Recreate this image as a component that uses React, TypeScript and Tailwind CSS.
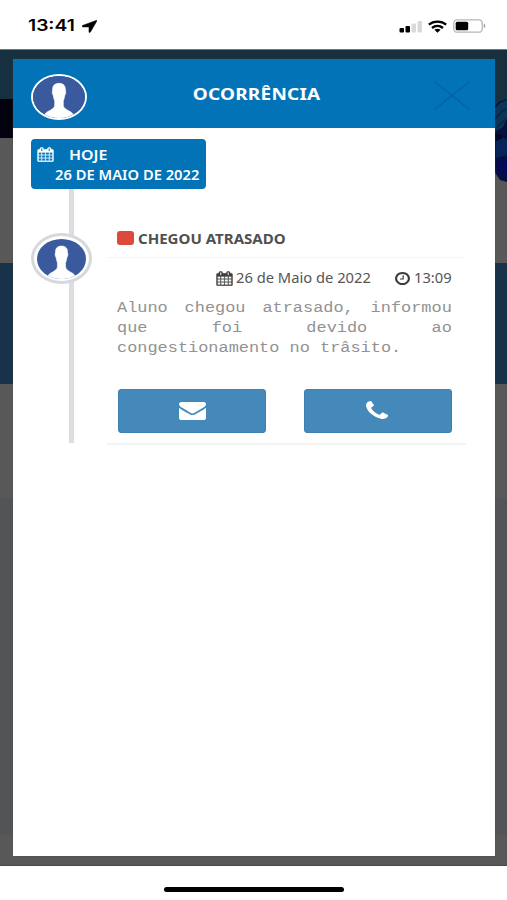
import type { ReactNode } from 'react'
import { clsx } from 'clsx'

interface IconProps {
  className?: string
}

interface GlyphProps extends IconProps {
  viewBox: string
  d: string
}

function Glyph({ viewBox, d, className }: GlyphProps) {
  return (
    <svg viewBox={viewBox} preserveAspectRatio="none" fill="currentColor" className={clsx('shrink-0', className)} aria-hidden="true">
      <path d={d} />
    </svg>
  )
}

const CALENDAR =
  'M128 1664h288v-288h-288v288zm352 0h320v-288h-320v288zm-352-352h288v-320h-288v320zm352 0h320v-320h-320v320zm-352-384h288v-288h-288v288zm736 736h320v-288h-320v288zm-384-736h320v-288h-320v288zm768 736h288v-288h-288v288zm-384-352h320v-320h-320v320zm-352-864v-288q0-13-9.5-22.5t-22.5-9.5h-64q-13 0-22.5 9.5t-9.5 22.5v288q0 13 9.5 22.5t22.5 9.5h64q13 0 22.5-9.5t9.5-22.5zm736 864h288v-320h-288v320zm-384-384h320v-288h-320v288zm384 0h288v-288h-288v288zm32-480v-288q0-13-9.5-22.5t-22.5-9.5h-64q-13 0-22.5 9.5t-9.5 22.5v288q0 13 9.5 22.5t22.5 9.5h64q13 0 22.5-9.5t9.5-22.5zm384-64v1280q0 52-38 90t-90 38h-1408q-52 0-90-38t-38-90v-1280q0-52 38-90t90-38h128v-96q0-66 47-113t113-47h64q66 0 113 47t47 113v96h384v-96q0-66 47-113t113-47h64q66 0 113 47t47 113v96h128q52 0 90 38t38 90z'
const CLOCK =
  'M1024 544v448q0 14-9 23t-23 9h-320q-14 0-23-9t-9-23v-64q0-14 9-23t23-9h224v-352q0-14 9-23t23-9h64q14 0 23 9t9 23zm416 352q0-148-73-273t-198-198-273-73-273 73-198 198-73 273 73 273 198 198 273 73 273-73 198-198 73-273zm224 0q0 209-103 385.5t-279.5 279.5-385.5 103-385.5-103-279.5-279.5-103-385.5 103-385.5 279.5-279.5 385.5-103 385.5 103 279.5 279.5 103 385.5z'
const ENVELOPE =
  'M1792 710v794q0 66-47 113t-113 47h-1472q-66 0-113-47t-47-113v-794q44 49 101 87 362 246 497 345 57 42 92.5 65.5t94.5 48 110 24.5h2q51 0 110-24.5t94.5-48 92.5-65.5q170-123 498-345 57-39 100-87zm0-294q0 79-49 151t-122 123q-376 261-468 325-10 7-42.5 31t-54 38.5-52 32.5-57.5 27-50 9h-2q-23 0-50-9t-57.5-27-52-32.5-54-38.5-42.5-31q-91-64-262-182.5t-205-142.5q-62-42-117-115.5t-55-136.5q0-78 41.5-130t118.5-52h1472q65 0 112.5 47t47.5 113z'
const PHONE =
  'M1600 1240q0 27-10 70.5t-21 68.5q-21 50-122 106-94 51-186 51-27 0-53-3.5t-57.5-12.5-47-14.5-55.5-20.5-49-18q-98-35-175-83-127-79-264-216t-216-264q-48-77-83-175-3-9-18-49t-20.5-55.5-14.5-47-12.5-57.5-3.5-53q0-92 51-186 56-101 106-122 25-11 68.5-21t70.5-10q14 0 21 3 18 6 53 76 11 19 30 54t35 63.5 31 53.5q3 4 17.5 25t21.5 35.5 7 28.5q0 20-28.5 50t-62 55-62 53-28.5 46q0 9 5 22.5t8.5 20.5 14 24 11.5 19q76 137 174 235t235 174q2 1 19 11.5t24 14 20.5 8.5 22.5 5q18 0 46-28.5t53-62 55-62 50-28.5q14 0 28.5 7t35.5 21.5 25 17.5q25 15 53.5 31t63.5 35 54 30q70 35 76 53 3 7 3 21z'

function CalendarIcon({ className }: IconProps) {
  return (
    <svg viewBox="-40 -40 1744 1872" preserveAspectRatio="none" fill="currentColor" stroke="currentColor" strokeWidth="30" className={clsx('shrink-0', className)} aria-hidden="true">
      <path d={CALENDAR} />
    </svg>
  )
}

function Avatar({ className }: IconProps) {
  return (
    <svg viewBox="0 0 50 40" preserveAspectRatio="none" className={clsx('shrink-0 rounded-[50%]', className)} aria-hidden="true">
      <rect width="50" height="40" fill="#3b5a9d" />
      <path
        d="M25 7c-4.500 0-6.300 2.500-6.200 6.500-.7 1.500-.3 4 .7 5.200.3 2.300.8 3.800 1.300 4.800v4.500c-.3 2.600-3 3.800-5.300 5.200-2 1.100-3.500 2-4.200 3.300L9 41h32l-2.300-4.500c-.7-1.300-2.200-2.200-4.200-3.300-2.300-1.400-5-2.600-5.300-5.200v-4.500c.5-1 1-2.500 1.300-4.800 1-1.200 1.400-3.700.7-5.200.1-4-1.700-6.500-6.200-6.500z"
        fill="#fff"
        stroke="#fff"
        strokeWidth="0.500"
      />
    </svg>
  )
}

function StatusBar() {
  return (
    <header className="flex h-[49px] shrink-0 items-center justify-between bg-white pt-[3px] pr-[21px] pl-[28px] text-black">
      <div className="flex items-center">
        <span className="w-[56px] origin-left scale-x-[1.24] font-['Inter'] text-[15.500px] leading-5 font-semibold">13:41</span>
        <svg viewBox="0 0 15 13" className="-ml-[2px] h-[13px] w-[15px]" fill="currentColor" aria-hidden="true">
          <path d="M14.200.5 0.600 5.500c-.7.300-.5 1.400.2 1.400h5.900c.2 0 .3.100.3.300v4.700c0 .7 1.100.8 1.400.2L14.800 1c.2-.4-.2-.7-.6-.5z" stroke="#000" strokeWidth="0.600" />
        </svg>
      </div>
      <div className="flex items-center">
        <svg viewBox="0 0 24 13" className="mr-[5px] h-[13px] w-[24px]" aria-hidden="true">
          <rect x="0.500" y="8" width="4.500" height="4.500" rx="1" fill="#000" />
          <rect x="6.500" y="6" width="4.500" height="6.500" rx="1" fill="#000" />
          <rect x="12.500" y="3.500" width="4.500" height="9" rx="1" fill="#d9d9d9" />
          <rect x="18.500" y="1" width="4.500" height="11.500" rx="1" fill="#d9d9d9" />
        </svg>
        <svg viewBox="0 0 19 13" className="mr-[6px] h-[13px] w-[19px]" fill="none" stroke="#000" strokeWidth="2.300" aria-hidden="true">
          <path d="M.8 4.700C5.600.6 13.400.6 18.200 4.700" />
          <path d="M4 8c3.300-2.700 7.700-2.700 11 0" />
          <path d="M6.400 9.700c1.800-1.300 4.400-1.300 6.200 0L9.500 12.800z" fill="#000" stroke="none" />
        </svg>
        <svg viewBox="0 0 33 14" className="h-[14px] w-[33px]" aria-hidden="true">
          <rect x="0.800" y="0.800" width="28.500" height="12.400" rx="3.500" fill="#fff" stroke="#b5b5b5" strokeWidth="1.300" />
          <rect x="2.700" y="2.700" width="12.500" height="8.600" rx="1.500" fill="#000" />
          <path d="M30.800 4.800c1.900.7 1.900 3.700 0 4.400z" fill="#999" />
        </svg>
      </div>
    </header>
  )
}

// Dimmed page that stays visible around the modal
function Backdrop() {
  return (
    <div className="flex h-full flex-col">
      <div className="h-[50px] border-t border-[#6b7b83] bg-[#16303f]" />
      <div className="flex h-[39px] justify-end bg-[#02030e]">
        <svg viewBox="0 0 13 83" className="relative h-[83px] w-[13px]" aria-hidden="true">
          <rect width="13" height="39" fill="#16303f" />
          <rect y="39" width="13" height="44" fill="#575757" />
          <path d="M0 8 5 3 13 0v83L6 81 0 72z" fill="#041140" />
          <path d="M0 10 6 4l7-3v18l-4 9-9 5z" fill="#0b3556" />
          <path d="M1 20l7-8 5-2M2 29l9-8" fill="none" stroke="#072744" strokeWidth="2" />
          <path d="M2 42l7-4 4 3v15l-11 3z" fill="#07245a" />
          <path d="M0 34l6 1 3 4-9 4z" fill="#010829" />
          <path d="M3 62l10-3v15l-8 1z" fill="#040a55" />
        </svg>
      </div>
      <div className="h-[125px] bg-[#585858]" />
      <div className="h-[121px] bg-[#183349]" />
      <div className="h-[114px] bg-[#585858]" />
      <div className="h-[337px] bg-[#525456]" />
      <div className="flex-1 border-b border-[#4a4a4a] bg-[#585858]" />
    </div>
  )
}

function ModalHeader({ title }: { title: string }) {
  return (
    <div className="flex h-[69px] items-center justify-between bg-[#0273b7] pr-[25px] pl-[18px]">
      <Avatar className="mt-[7px] h-[46px] w-[56px] border-2 border-white" />
      <h1 className="mt-px mr-[7px] origin-center scale-x-[1.15] text-[16.500px] leading-6 font-bold tracking-[0.2px] text-white">{title}</h1>
      <button type="button" aria-label="Fechar" className="mt-[3px]">
        <svg viewBox="0 0 36 29" className="h-[29px] w-[36px]" fill="none" stroke="#0860a0" strokeWidth="1.200">
          <path d="M.5.5 35.500 28.500M35.500.5.5 28.500" />
        </svg>
      </button>
    </div>
  )
}

function DateLabel() {
  return (
    <div className="relative flex h-[50px] w-[175px] rounded-[4px] bg-[#0273b7] pt-[6px] pl-[6px] text-[13.500px] leading-5 font-semibold text-white">
      <CalendarIcon className="mt-[2px] h-[15px] w-[17px]" />
      <div className="flex flex-col whitespace-nowrap">
        <span className="ml-[15px] origin-left scale-x-[1.18]">HOJE</span>
        <span className="ml-px origin-left scale-x-[1.09]">26 DE MAIO DE 2022</span>
      </div>
    </div>
  )
}

function ActionButton({ label, children }: { label: string; children: ReactNode }) {
  return (
    <button type="button" aria-label={label} className="flex h-[44px] w-[148px] items-center justify-center rounded-[3px] border border-[#3f80b0] bg-[#4489ba] text-white">
      {children}
    </button>
  )
}

function TimelineItem() {
  return (
    <article className="ml-[15px] w-[359px] border-b-2 border-[#f4f4f4]">
      <div className="flex h-[39px] items-center border-b border-[#f6f6f6] pl-[10px]">
        <span className="h-[14px] w-[17px] rounded-[3px] bg-[#dc4a3b]" />
        <h2 className="mt-[2px] ml-[4px] origin-left scale-x-[1.115] text-[13.500px] leading-5 font-bold whitespace-nowrap text-[#505050]">CHEGOU ATRASADO</h2>
      </div>
      <div className="flex h-[40px] items-center justify-end pr-[14px] text-[13.500px] text-[#555]">
        <CalendarIcon className="mr-[3px] h-[15px] w-[17px] text-[#3c3c3c]" />
        <time className="w-[136px] origin-left scale-x-[1.09] whitespace-nowrap">26 de Maio de 2022</time>
        <Glyph viewBox="128 128 1536 1536" d={CLOCK} className="mr-[4px] ml-[23px] h-[13px] w-[15px] text-[#3c3c3c]" />
        <time className="w-[38px] origin-left scale-x-[1.09]">13:09</time>
      </div>
      <p className="ml-[10px] w-[279px] origin-left scale-x-[1.2] text-justify font-['Liberation_Mono',monospace] text-[14.100px] leading-5 text-[#929292]">
        Aluno chegou atrasado, informou que foi devido ao congestionamento no trâsito.
      </p>
      <div className="mt-[31px] mb-[10px] ml-[11px] flex gap-[38px]">
        <ActionButton label="Enviar mensagem">
          <Glyph viewBox="0 256 1792 1408" d={ENVELOPE} className="h-[18px] w-[27px]" />
        </ActionButton>
        <ActionButton label="Ligar">
          <Glyph viewBox="192 128 1408 1408" d={PHONE} className="mr-[2px] mb-[3px] h-[18px] w-[22px]" />
        </ActionButton>
      </div>
    </article>
  )
}

function Timeline() {
  return (
    <div className="relative pt-[11px] pl-[18px]">
      <div className="absolute top-[30px] bottom-[2px] left-[56px] w-[5px] bg-[#dcdddf]" />
      <DateLabel />
      <div className="mt-[30px] flex items-start">
        <div className="relative mt-[14px] h-[51px] w-[61px] shrink-0 rounded-[50%] bg-[#d5d8dd] p-[3px]">
          <div className="h-full rounded-[50%] bg-white px-[3px] pt-[3px] pb-[2px]">
            <Avatar className="h-full w-full" />
          </div>
        </div>
        <TimelineItem />
      </div>
    </div>
  )
}

export default function App() {
  return (
    <div className="flex h-[900px] w-[507px] flex-col overflow-hidden bg-white font-['Noto_Sans',sans-serif]">
      <StatusBar />
      <main className="relative h-[817px] shrink-0">
        <Backdrop />
        <section className="absolute inset-x-0 top-[10px] mr-[12px] ml-[13px] h-[797px] bg-white shadow-[0_0_1px_#444]">
          <ModalHeader title="OCORRÊNCIA" />
          <Timeline />
        </section>
      </main>
      <footer className="flex flex-1 justify-center pt-[21px]">
        <div className="h-[5px] w-[180px] rounded-full bg-black" />
      </footer>
    </div>
  )
}
